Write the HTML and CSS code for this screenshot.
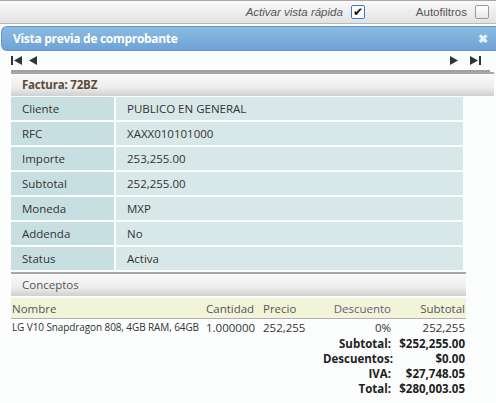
FILE: index.html
```html
<!DOCTYPE html>
<html lang="es">
<head>
    <meta charset="UTF-8">
    <title>Vista previa de comprobante</title>
    <link rel="stylesheet" href="styles.css">
</head>
<body>
    <div class="toolbar">
        <label class="quick">Activar vista rápida <span class="check on">&#10004;</span></label>
        <label class="filters">Autofiltros <span class="check"></span></label>
    </div>

    <div class="dialog">
        <div class="dialog-title">
            <span>Vista previa de comprobante</span>
            <span class="close">&#10006;</span>
        </div>

        <div class="pager">
            <div class="pager-group">
                <svg width="13" height="11" viewBox="0 0 13 11"><rect x="0" y="1" width="2" height="9" fill="#333"/><polygon points="3,5.5 11,1 11,10" fill="#333"/></svg>
                <svg width="9" height="11" viewBox="0 0 9 11"><polygon points="0,5.5 8,1 8,10" fill="#333"/></svg>
            </div>
            <div class="pager-group">
                <svg width="9" height="11" viewBox="0 0 9 11"><polygon points="9,5.5 1,1 1,10" fill="#333"/></svg>
                <svg width="13" height="11" viewBox="0 0 13 11"><polygon points="10,5.5 2,1 2,10" fill="#333"/><rect x="11" y="1" width="2" height="9" fill="#333"/></svg>
            </div>
        </div>

        <div class="section-head invoice">Factura: 72BZ</div>

        <div class="details">
            <div class="label">Cliente</div><div class="value">PUBLICO EN GENERAL</div>
            <div class="label">RFC</div><div class="value">XAXX010101000</div>
            <div class="label">Importe</div><div class="value">253,255.00</div>
            <div class="label">Subtotal</div><div class="value">252,255.00</div>
            <div class="label">Moneda</div><div class="value">MXP</div>
            <div class="label">Addenda</div><div class="value">No</div>
            <div class="label">Status</div><div class="value">Activa</div>
        </div>

        <div class="section-head concepts">Conceptos</div>

        <table class="items">
            <colgroup>
                <col class="c-name"><col class="c-qty"><col class="c-price"><col class="c-disc"><col class="c-sub">
            </colgroup>
            <thead>
                <tr>
                    <th>Nombre</th>
                    <th>Cantidad</th>
                    <th>Precio</th>
                    <th class="num disc">Descuento</th>
                    <th class="num">Subtotal</th>
                </tr>
            </thead>
            <tbody>
                <tr class="line">
                    <td class="small">LG V10 Snapdragon 808, 4GB RAM, 64GB</td>
                    <td>1.000000</td>
                    <td>252,255</td>
                    <td class="num">0%</td>
                    <td class="num">252,255</td>
                </tr>
                <tr class="total"><td colspan="3"></td><td class="num">Subtotal:</td><td class="num">$252,255.00</td></tr>
                <tr class="total"><td colspan="3"></td><td class="num">Descuentos:</td><td class="num">$0.00</td></tr>
                <tr class="total"><td colspan="3"></td><td class="num">IVA:</td><td class="num">$27,748.05</td></tr>
                <tr class="total"><td colspan="3"></td><td class="num">Total:</td><td class="num">$280,003.05</td></tr>
            </tbody>
        </table>
    </div>
</body>
</html>
```

FILE: styles.css
```css
body {
    margin: 0;
    background: #fcfdfd;
    font-family: "Open Sans", "Noto Sans", sans-serif;
    font-size: 11.5px;
    color: #333;
}

.toolbar {
    height: 22px;
    border-top: 1px solid #a8a8a8;
    border-bottom: 1px solid #b8b8b8;
    background: linear-gradient(#fafafa, #e2e2e2);
    display: flex;
    justify-content: flex-end;
    align-items: center;
    font-family: "Liberation Sans", Arial, sans-serif;
    font-size: 11.5px;
    color: #555;
}
.toolbar label {
    display: flex;
    align-items: center;
    gap: 8px;
}
.quick { font-style: italic; margin-right: 51px; }
.filters { margin-right: 7px; }
.check {
    width: 12px;
    height: 12px;
    border: 1px solid #999;
    border-radius: 2px;
    background: linear-gradient(#fff, #e8e8e8);
    font-style: normal;
    font-size: 12px;
    line-height: 12px;
    text-align: center;
    color: #111;
}
.check.on {
    border-color: #2a7fd4;
    background: #fff;
}

.dialog { margin-top: 2px; }
.dialog-title {
    height: 23px;
    margin-left: 1px;
    border: 1px solid #5f98cf;
    border-right: none;
    border-radius: 6px 0 0 6px;
    background: linear-gradient(#8cbbe2, #6fa3d4);
    display: flex;
    justify-content: space-between;
    align-items: center;
    padding: 0 8px 0 11px;
    color: #fff;
    font-weight: bold;
    font-size: 12px;
    letter-spacing: -0.3px;
}
.close { font-size: 12px; color: #e8f0f8; }

.pager {
    margin: 0 6px 0 11px;
    height: 19px;
    border-bottom: 2px solid #a0a0a0;
    display: flex;
    justify-content: space-between;
    align-items: center;
}
.pager-group { display: flex; gap: 5px; }
.pager-group:last-child { gap: 10px; margin-right: 9px; }

.section-head {
    height: 22px;
    line-height: 22px;
    padding-left: 11px;
    border-top: 2px solid #a8a8a8;
    background: linear-gradient(#fafafa 0%, #eeeeee 60%, #cfcfcf 100%);
}
.invoice {
    margin: 0 2px 1px 11px;
    font-weight: bold;
    color: #5a4c3c;
    letter-spacing: -0.2px;
}
.concepts {
    margin: 2px 30px 2px 11px;
    color: #555;
}

.details {
    margin: 0 33px 0 11px;
    display: grid;
    grid-template-columns: 103px 1fr;
    gap: 2px;
}
.details div {
    height: 23px;
    line-height: 23px;
    padding-left: 11px;
}
.label { background: #c8dfe1; }
.value { background: #d8e7e7; }

.items {
    margin-left: 11px;
    width: 455px;
    border-collapse: collapse;
    table-layout: fixed;
    white-space: nowrap;
}
.c-name { width: 194px; }
.c-qty { width: 57px; }
.c-price { width: 60px; }
.c-disc { width: 70px; }
.c-sub { width: 74px; }
.items th {
    background: #f2f4da;
    font-weight: normal;
    color: #555;
    height: 20px;
    padding: 0 1px;
    border-bottom: 1px solid #b0b0b0;
    text-align: left;
}
.items th.disc { color: #6a5a78; }
.items td { padding: 0 1px; height: 15px; line-height: 15px; overflow: visible; }
.items .num { text-align: right; }
.items .small { font-size: 10px; letter-spacing: -0.1px; }
.items .line td { height: 17px; }
.total td { font-weight: bold; color: #222; }
```
